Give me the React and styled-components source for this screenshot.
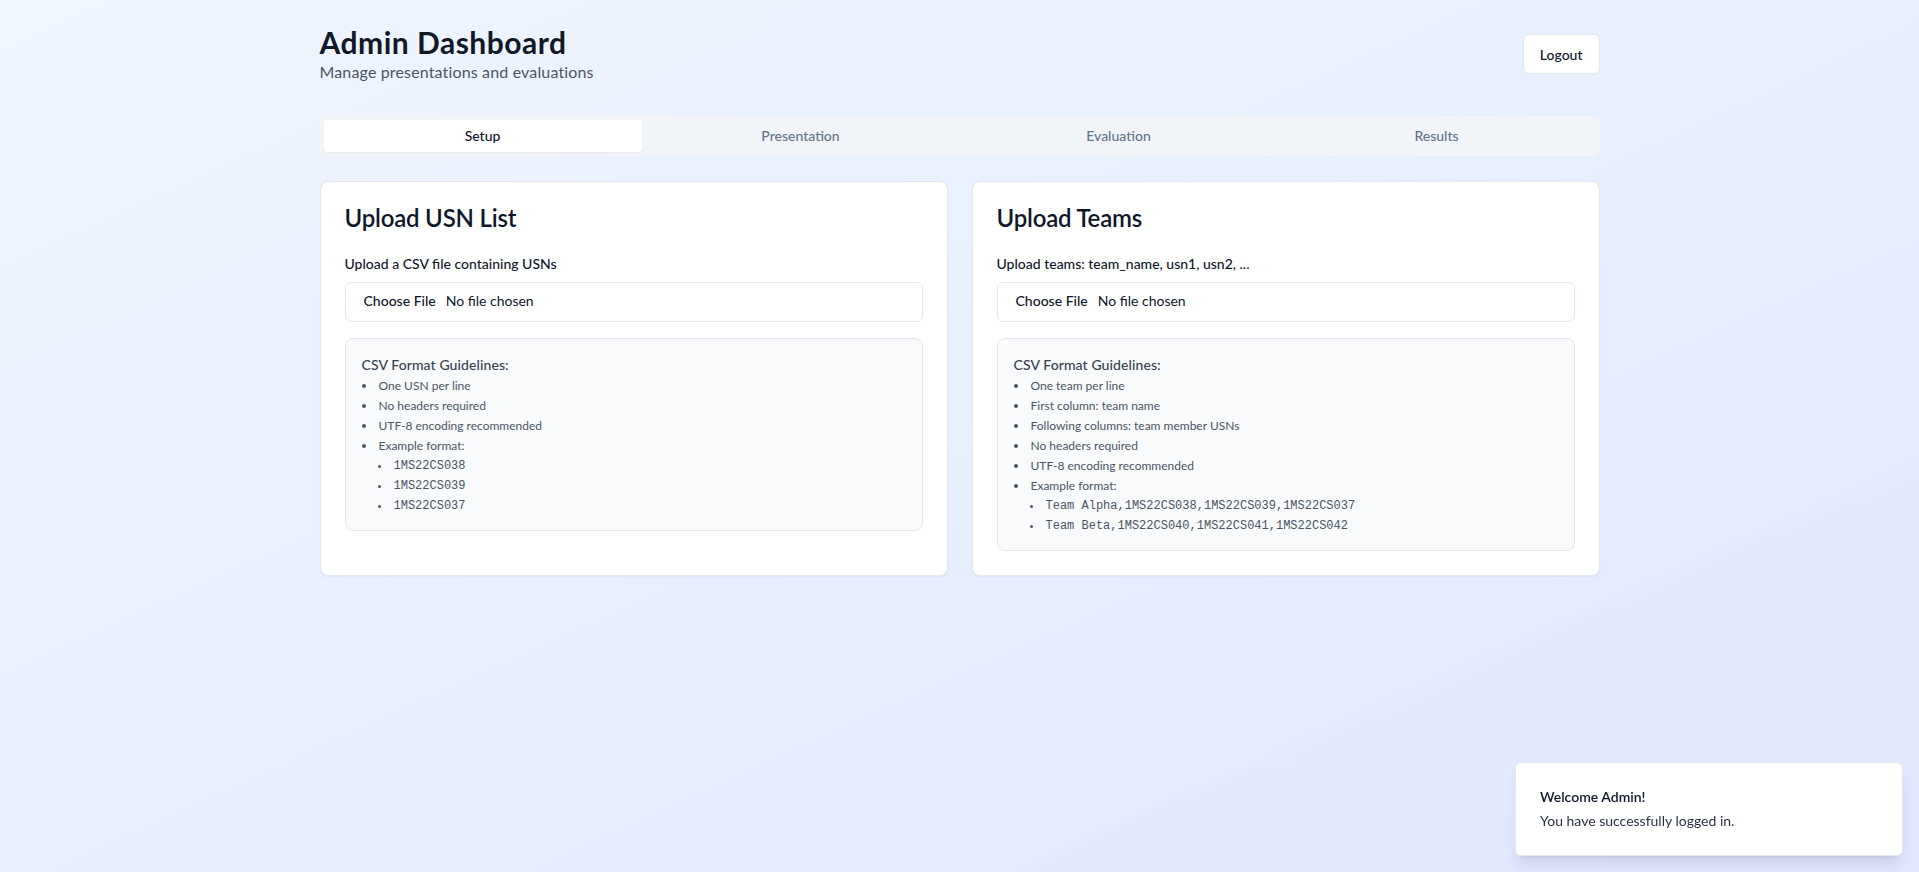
import React, { useState } from 'react';
import styled, { createGlobalStyle } from 'styled-components';

const GlobalStyle = createGlobalStyle`
    * {
        box-sizing: border-box;
    }
    body {
        margin: 0;
        font-family: Lato, "Noto Sans", sans-serif;
        color: #0f172a;
    }
`;

// Фон страницы
const Page = styled.div`
    min-height: 100vh;
    background: linear-gradient(to bottom right, #eff6ff, #e0e7ff);
    padding: 24px 0;
`;

const Container = styled.div`
    max-width: 1280px;
    margin: 0 auto;
`;

const Header = styled.header`
    display: flex;
    justify-content: space-between;
    align-items: center;
    margin-bottom: 32px;
`;

const Title = styled.h1`
    margin: 0;
    font-size: 30px;
    line-height: 36px;
    font-weight: 700;
    letter-spacing: 0.5px;
    color: #111827;
`;

const Subtitle = styled.p`
    margin: 0;
    font-size: 16px;
    line-height: 24px;
    letter-spacing: 0.15px;
    color: #4b5563;
`;

const OutlineButton = styled.button`
    height: 40px;
    padding: 0 16px;
    background: #fff;
    border: 1px solid #e2e8f0;
    border-radius: 6px;
    font-family: inherit;
    font-size: 14px;
    font-weight: 500;
    color: #0f172a;
    cursor: pointer;
`;

// Вкладки
const TabsList = styled.div`
    display: grid;
    grid-template-columns: repeat(4, 1fr);
    height: 40px;
    padding: 4px;
    background: #f1f5f9;
    border-radius: 6px;
    margin-bottom: 25px;
`;

const Tab = styled.button`
    border: 0;
    border-radius: 4px;
    padding: 0 0 2px;
    font-family: inherit;
    font-size: 14px;
    font-weight: 500;
    cursor: pointer;
    background: ${(p) => (p.$active ? '#fff' : 'transparent')};
    color: ${(p) => (p.$active ? '#0f172a' : '#64748b')};
    box-shadow: ${(p) => (p.$active ? '0 1px 2px rgba(0, 0, 0, 0.05)' : 'none')};
`;

const CardsGrid = styled.div`
    display: grid;
    grid-template-columns: 1fr 1fr;
    gap: 24px;
`;

const Card = styled.section`
    background: #fff;
    border: 1px solid #e2e8f0;
    border-radius: 8px;
    box-shadow: 0 1px 2px rgba(0, 0, 0, 0.05);
`;

const CardHeader = styled.div`
    padding: 24px;
`;

const CardTitle = styled.h3`
    margin: 0;
    font-size: 24px;
    line-height: 24px;
    font-weight: 600;
    letter-spacing: -0.2px;
`;

const CardContent = styled.div`
    padding: 0 24px 24px;
`;

const Label = styled.label`
    display: block;
    font-size: 14px;
    line-height: 20px;
    font-weight: 500;
    margin-bottom: 8px;
`;

const FileInput = styled.input`
    display: flex;
    width: 100%;
    height: 40px;
    padding: 8px 12px;
    border: 1px solid #e2e8f0;
    border-radius: 6px;
    background: #fff;
    font-family: inherit;
    font-size: 14px;
    color: #0f172a;

    &::file-selector-button {
        border: 0;
        background: transparent;
        font-family: inherit;
        font-size: 14px;
        font-weight: 500;
        color: #0f172a;
        padding: 1px 6px;
        margin-right: 4px;
    }
`;

const Guidelines = styled.div`
    margin-top: 16px;
    padding: 16px;
    background: #f8fafc;
    border: 1px solid #e2e8f0;
    border-radius: 8px;
`;

const GuideTitle = styled.h4`
    margin: 0 0 3px;
    font-size: 14px;
    line-height: 20px;
    font-weight: 500;
    letter-spacing: 0.1px;
    color: #374151;
`;

const List = styled.ul`
    margin: ${(p) => (p.$nested ? '4px 0 0 16px' : '0')};
    padding: 0;
    list-style: disc inside;
    display: flex;
    flex-direction: column;
    gap: 4px;
`;

const Item = styled.li`
    font-size: 12px;
    line-height: 16px;
    color: #4b5563;
    font-family: ${(p) => (p.$mono ? '"Liberation Mono", "DejaVu Sans Mono", monospace' : 'inherit')};
`;

// Всплывающее уведомление
const Toast = styled.div`
    position: fixed;
    right: 16px;
    bottom: 16px;
    width: 388px;
    padding: 24px 32px 24px 24px;
    background: #fff;
    border: 1px solid #e2e8f0;
    border-radius: 6px;
    box-shadow: 0 10px 15px -3px rgba(0, 0, 0, 0.1), 0 4px 6px -4px rgba(0, 0, 0, 0.1);
`;

const ToastTitle = styled.div`
    font-size: 14px;
    line-height: 20px;
    font-weight: 600;
`;

const ToastText = styled.div`
    margin-top: 4px;
    font-size: 14px;
    line-height: 20px;
    opacity: 0.9;
`;

const tabs = ['Setup', 'Presentation', 'Evaluation', 'Results'];

const uploads = [
    {
        title: 'Upload USN List',
        label: 'Upload a CSV file containing USNs',
        rules: ['One USN per line', 'No headers required', 'UTF-8 encoding recommended'],
        examples: ['1MS22CS038', '1MS22CS039', '1MS22CS037'],
    },
    {
        title: 'Upload Teams',
        label: 'Upload teams: team_name, usn1, usn2, ...',
        rules: [
            'One team per line',
            'First column: team name',
            'Following columns: team member USNs',
            'No headers required',
            'UTF-8 encoding recommended',
        ],
        examples: [
            'Team Alpha,1MS22CS038,1MS22CS039,1MS22CS037',
            'Team Beta,1MS22CS040,1MS22CS041,1MS22CS042',
        ],
    },
];

export default function App() {
    const [activeTab, setActiveTab] = useState('Setup');

    return (
        <Page>
            <GlobalStyle />
            <Container>
                <Header>
                    <div>
                        <Title>Admin Dashboard</Title>
                        <Subtitle>Manage presentations and evaluations</Subtitle>
                    </div>
                    <OutlineButton>Logout</OutlineButton>
                </Header>

                <TabsList>
                    {tabs.map((tab) => (
                        <Tab key={tab} $active={tab === activeTab} onClick={() => setActiveTab(tab)}>
                            {tab}
                        </Tab>
                    ))}
                </TabsList>

                <CardsGrid>
                    {uploads.map((u) => (
                        <Card key={u.title}>
                            <CardHeader>
                                <CardTitle>{u.title}</CardTitle>
                            </CardHeader>
                            <CardContent>
                                <Label>{u.label}</Label>
                                <FileInput type="file" accept=".csv" />
                                <Guidelines>
                                    <GuideTitle>CSV Format Guidelines:</GuideTitle>
                                    <List>
                                        {u.rules.map((r) => (
                                            <Item key={r}>{r}</Item>
                                        ))}
                                        <Item>
                                            Example format:
                                            <List $nested>
                                                {u.examples.map((ex) => (
                                                    <Item key={ex} $mono>{ex}</Item>
                                                ))}
                                            </List>
                                        </Item>
                                    </List>
                                </Guidelines>
                            </CardContent>
                        </Card>
                    ))}
                </CardsGrid>
            </Container>

            <Toast>
                <ToastTitle>Welcome Admin!</ToastTitle>
                <ToastText>You have successfully logged in.</ToastText>
            </Toast>
        </Page>
    );
}
